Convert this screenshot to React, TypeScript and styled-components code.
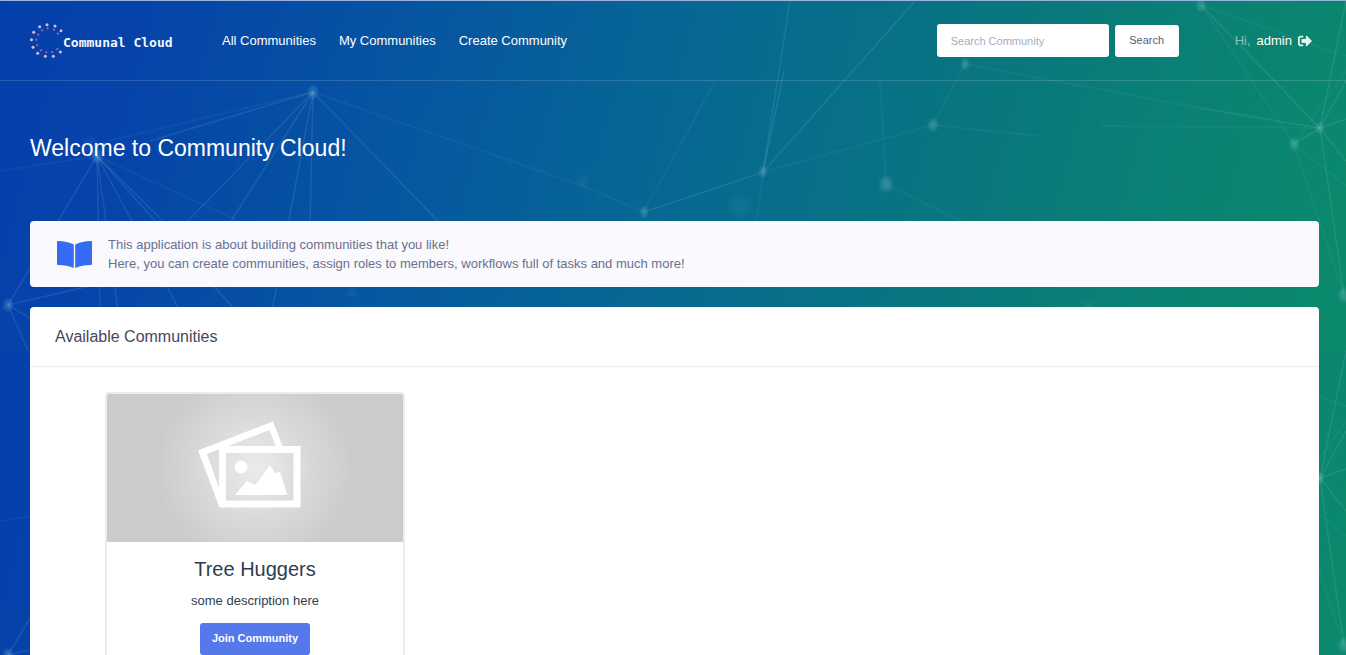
import React from 'react';
import styled, { createGlobalStyle } from 'styled-components';
import { FaSignOutAlt } from 'react-icons/fa';

const GlobalStyle = createGlobalStyle`
  * { box-sizing: border-box; }
  body {
    margin: 0;
    background: #0540aa;
    font-family: "Liberation Sans", Arial, sans-serif;
    font-size: 13px;
    color: #6a708f;
  }
  h1, h2, h3, p { margin: 0; font-weight: 400; }
`;

const Page = styled.div`
  position: relative;
  isolation: isolate;
  display: flex;
  flex-direction: column;
  min-height: 100vh;
  overflow: hidden;
  border-top: 1px solid rgba(255, 255, 255, 0.6);
`;

const Backdrop = styled.svg`
  position: absolute;
  inset: 0;
  z-index: -1;
  width: 100%;
  height: 700px;
`;

const Header = styled.header`
  display: flex;
  align-items: center;
  height: 80px;
  padding: 0 34px 0 30px;
  border-bottom: 1px solid rgba(255, 255, 255, 0.15);
`;

const Brand = styled.a`
  display: flex;
  align-items: center;
  width: 180px;
  color: #f2f7ff;
  font: 700 13px "DejaVu Sans Mono", monospace;
  text-decoration: none;
  white-space: nowrap;
`;

const BrandMark = styled.svg`
  flex: none;
  width: 33px;
  height: 38px;
`;

const BrandName = styled.span`
  padding-top: 4px;
`;

const Nav = styled.nav`
  display: flex;
  gap: 23px;
  padding-left: 12px;
`;

const NavLink = styled.a`
  color: #fff;
  font-size: 13px;
  line-height: 20px;
  text-decoration: none;
`;

const SearchForm = styled.form`
  display: flex;
  align-items: center;
  gap: 6px;
  margin-left: auto;
`;

const SearchInput = styled.input`
  width: 172px;
  height: 33px;
  padding: 1px 14px 0;
  border: 0;
  border-radius: 3px;
  background: #fff;
  color: #575962;
  font: 11px "Liberation Sans", Arial, sans-serif;
  &::placeholder { color: #a7abc3; opacity: 1; }
`;

const SearchButton = styled.button`
  width: 64px;
  height: 32px;
  padding: 0 0 2px;
  border: 0;
  border-radius: 3px;
  background: #fff;
  color: #595d7e;
  font: 11px "Liberation Sans", Arial, sans-serif;
`;

const Account = styled.div`
  display: flex;
  align-items: center;
  gap: 6px;
  margin-left: 56px;
  color: #fff;
  line-height: 20px;
`;

const Greeting = styled.span`
  opacity: 0.5;
`;

const Logout = styled.a`
  display: flex;
  color: #e6f3f1;
`;

const Main = styled.main`
  display: flex;
  flex-direction: column;
  flex: 1;
  gap: 20px;
  padding: 0 27px 0 30px;
`;

const Title = styled.h1`
  padding: 52px 0 38px;
  color: #fff;
  font-size: 23px;
  line-height: 30px;
`;

const Notice = styled.section`
  display: flex;
  align-items: center;
  gap: 16px;
  height: 66px;
  padding: 0 27px;
  border-radius: 4px;
  background: #f9f9fe;
  line-height: 19px;
`;

const BookIcon = styled.svg`
  flex: none;
  width: 35px;
  height: 28px;
`;

const Portlet = styled.section`
  flex: 1;
  border-radius: 4px 4px 0 0;
  background: #fff;
`;

const PortletHead = styled.header`
  display: flex;
  align-items: center;
  height: 60px;
  padding: 0 25px;
  border-bottom: 1px solid #ebedf2;
`;

const PortletTitle = styled.h2`
  color: #48465b;
  font-size: 16px;
`;

const CardGrid = styled.div`
  display: flex;
  flex-wrap: wrap;
  gap: 30px;
  padding: 25px 75px;
`;

const Card = styled.article`
  display: flex;
  flex-direction: column;
  align-items: center;
  width: 300px;
  padding-bottom: 20px;
  border: 2px solid #ececec;
  border-radius: 4px;
  color: #2c3e50;
`;

const CardImage = styled.svg`
  width: 100%;
  height: 148px;
  border-radius: 2px 2px 0 0;
`;

const CardTitle = styled.h3`
  padding-top: 14px;
  font-size: 20px;
  line-height: 26px;
`;

const CardText = styled.p`
  padding: 9px 0 12px;
  line-height: 20px;
`;

const JoinButton = styled.button`
  width: 110px;
  height: 32px;
  padding: 0 0 2px;
  border: 0;
  border-radius: 3px;
  background: #5578eb;
  color: #fff;
  font: 700 11px "Liberation Sans", Arial, sans-serif;
`;

const outerDots = [
  [17, 2.7], [25, 4], [31, 8.7], [9.7, 4.7], [3.7, 10.3], [1.5, 17.7], [3, 25.3],
  [7.7, 31.3], [15.3, 34.3], [23.3, 34.3], [30.3, 30],
];
const innerDots = [
  [17.7, 6.3], [24, 7.7], [28, 11.7], [12, 8.3], [8.3, 12.7], [6.3, 17.7], [7.3, 23.3],
  [11, 28.3], [16.3, 30.3], [22, 30], [27.3, 27],
];

const nodes = [
  [313, 91, 5], [97, 155, 6], [8, 304, 5], [763, 171, 4], [644, 211, 4], [886, 183, 7],
  [933, 124, 5], [965, 63, 4], [1320, 127, 4], [1294, 143, 5], [1201, 4, 5],
  [1344, 294, 6],
];

const faintNodes = [
  [740, 205, 14], [352, 292, 6], [1088, 308, 9], [583, 180, 8], [90, 143, 10],
];

const links = [
  [313, 91, 150, 140], [313, 91, 183, 225], [313, 91, 228, 225],
  [313, 91, 272, 310], [313, 91, 310, 225], [313, 91, 440, 222],
  [97, 155, 8, 304], [97, 155, 100, 310], [97, 155, 118, 310],
  [97, 155, 180, 310], [97, 155, 245, 320], [97, 155, 165, 222],
  [8, 304, 90, 285], [8, 304, 60, 335], [8, 304, 28, 350],
  [763, 171, 644, 211], [763, 171, 790, 0], [763, 171, 784, 70],
  [763, 171, 915, 0], [1320, 127, 1201, 4], [1320, 127, 1346, 0],
  [1320, 127, 1346, 80], [1320, 127, 1346, 118], [1320, 127, 1346, 160],
  [1320, 127, 1294, 143], [1320, 127, 1344, 294], [1320, 127, 1200, 107],
];

const faintLinks = [
  [313, 91, 583, 185], [583, 185, 644, 211], [313, 91, 100, 142], [97, 155, 0, 170],
  [97, 155, 260, 230], [8, 304, 0, 310], [763, 171, 933, 124], [763, 171, 756, 225],
  [644, 211, 715, 80], [933, 124, 1040, 135], [933, 124, 965, 63], [965, 63, 1200, 107],
  [1320, 127, 1100, 125], [1294, 143, 1346, 185], [1294, 143, 1344, 294],
  [1294, 143, 1201, 4], [1294, 143, 1346, 70], [1201, 4, 1346, 55],
  [886, 183, 880, 80], [886, 183, 960, 220],
];

function NetworkTile({ y }: { y: number }) {
  return (
    <svg y={y} width="100%" height="350" viewBox="0 0 1346 350" preserveAspectRatio="none">
      <rect width="1346" height="350" fill="url(#sea)" />
      <g stroke="#a8d4f0" strokeOpacity="0.13" strokeWidth="1.5">
        {links.map(([x1, y1, x2, y2], i) => (
          <line key={i} x1={x1} y1={y1} x2={x2} y2={y2} />
        ))}
      </g>
      <g stroke="#a8d4f0" strokeOpacity="0.06" strokeWidth="2">
        {faintLinks.map(([x1, y1, x2, y2], i) => (
          <line key={i} x1={x1} y1={y1} x2={x2} y2={y2} />
        ))}
      </g>
      {nodes.map(([cx, cy, r], i) => (
        <ellipse key={i} cx={cx} cy={cy} rx={r + 1} ry={r + 3} fill="url(#glow)" />
      ))}
      <g opacity="0.3">
        {faintNodes.map(([cx, cy, r], i) => (
          <circle key={i} cx={cx} cy={cy} r={r} fill="url(#glow)" />
        ))}
      </g>
    </svg>
  );
}

function Network() {
  return (
    <Backdrop aria-hidden="true">
      <defs>
        <linearGradient id="sea" gradientUnits="userSpaceOnUse" x1="0" y1="0" x2="1310" y2="350">
          <stop offset="0" stopColor="#053fab" />
          <stop offset="0.1" stopColor="#0543a9" />
          <stop offset="0.28" stopColor="#0653a2" />
          <stop offset="0.5" stopColor="#066794" />
          <stop offset="0.7" stopColor="#087580" />
          <stop offset="0.88" stopColor="#0a8273" />
          <stop offset="1" stopColor="#0a896c" />
        </linearGradient>
        <radialGradient id="glow">
          <stop offset="0" stopColor="#90cce0" stopOpacity="0.3" />
          <stop offset="0.5" stopColor="#90cce0" stopOpacity="0.2" />
          <stop offset="1" stopColor="#90cce0" stopOpacity="0" />
        </radialGradient>
      </defs>
      <NetworkTile y={0} />
      <NetworkTile y={350} />
    </Backdrop>
  );
}

export default function App() {
  return (
    <>
      <GlobalStyle />
      <Page>
        <Network />
        <Header>
          <Brand href="#">
            <BrandMark viewBox="0 0 33 38" aria-hidden="true">
              {outerDots.map(([x, y], i) => <circle key={i} cx={x} cy={y} r="1.5" fill="#dcbccb" />)}
              {innerDots.map(([x, y], i) => <circle key={i} cx={x} cy={y} r="1.1" fill="#a765a5" />)}
            </BrandMark>
            <BrandName>Communal Cloud</BrandName>
          </Brand>
          <Nav>
            <NavLink href="#">All Communities</NavLink>
            <NavLink href="#">My Communities</NavLink>
            <NavLink href="#">Create Community</NavLink>
          </Nav>
          <SearchForm onSubmit={(e) => e.preventDefault()}>
            <SearchInput type="text" aria-label="Search Community" placeholder="Search Community" />
            <SearchButton type="submit">Search</SearchButton>
          </SearchForm>
          <Account>
            <Greeting>Hi,</Greeting>
            <span>admin</span>
            <Logout href="#" aria-label="Log out"><FaSignOutAlt size={14} /></Logout>
          </Account>
        </Header>
        <Main>
          <Title>Welcome to Community Cloud!</Title>
          <Notice>
            <BookIcon viewBox="0 0 35 28" aria-hidden="true">
              <path d="M0 2Q0 1 1 1Q10 1 16.8 4.500V28Q10 25 1 25Q0 25 0 24ZM35 2Q35 1 34 1Q25 1 18.200 4.500V28Q25 25 34 25Q35 25 35 24Z" fill="#366cf3" />
            </BookIcon>
            <p>
              This application is about building communities that you like!
              <br />
              Here, you can create communities, assign roles to members, workflows full of tasks and much more!
            </p>
          </Notice>
          <Portlet>
            <PortletHead>
              <PortletTitle>Available Communities</PortletTitle>
            </PortletHead>
            <CardGrid>
              <Card>
                <CardImage viewBox="0 0 296 148" preserveAspectRatio="xMidYMid slice" role="img" aria-label="Community picture">
                  <defs>
                    <radialGradient id="spot" gradientUnits="userSpaceOnUse" cx="148" cy="74" r="100">
                      <stop offset="0" stopColor="#ebebeb" />
                      <stop offset="0.5" stopColor="#dadada" />
                      <stop offset="1" stopColor="#cbcbcb" />
                    </radialGradient>
                  </defs>
                  <rect width="296" height="148" fill="url(#spot)" />
                  <path
                    fill="#fff"
                    fillRule="evenodd"
                    d="M91 56.500L166 27.500L175.500 52H193.500V113.500H112.500ZM100 60L112 94V55.500ZM121 52H168.500L162.500 36ZM119 59H186.500V106.500H119Z"
                  />
                  <circle cx="134" cy="73" r="6.500" fill="#fff" />
                  <path fill="#fff" d="M128 101L140 87L148.500 91L163 71L168 79L173 78L180.500 101Z" />
                </CardImage>
                <CardTitle>Tree Huggers</CardTitle>
                <CardText>some description here</CardText>
                <JoinButton type="button">Join Community</JoinButton>
              </Card>
            </CardGrid>
          </Portlet>
        </Main>
      </Page>
    </>
  );
}
